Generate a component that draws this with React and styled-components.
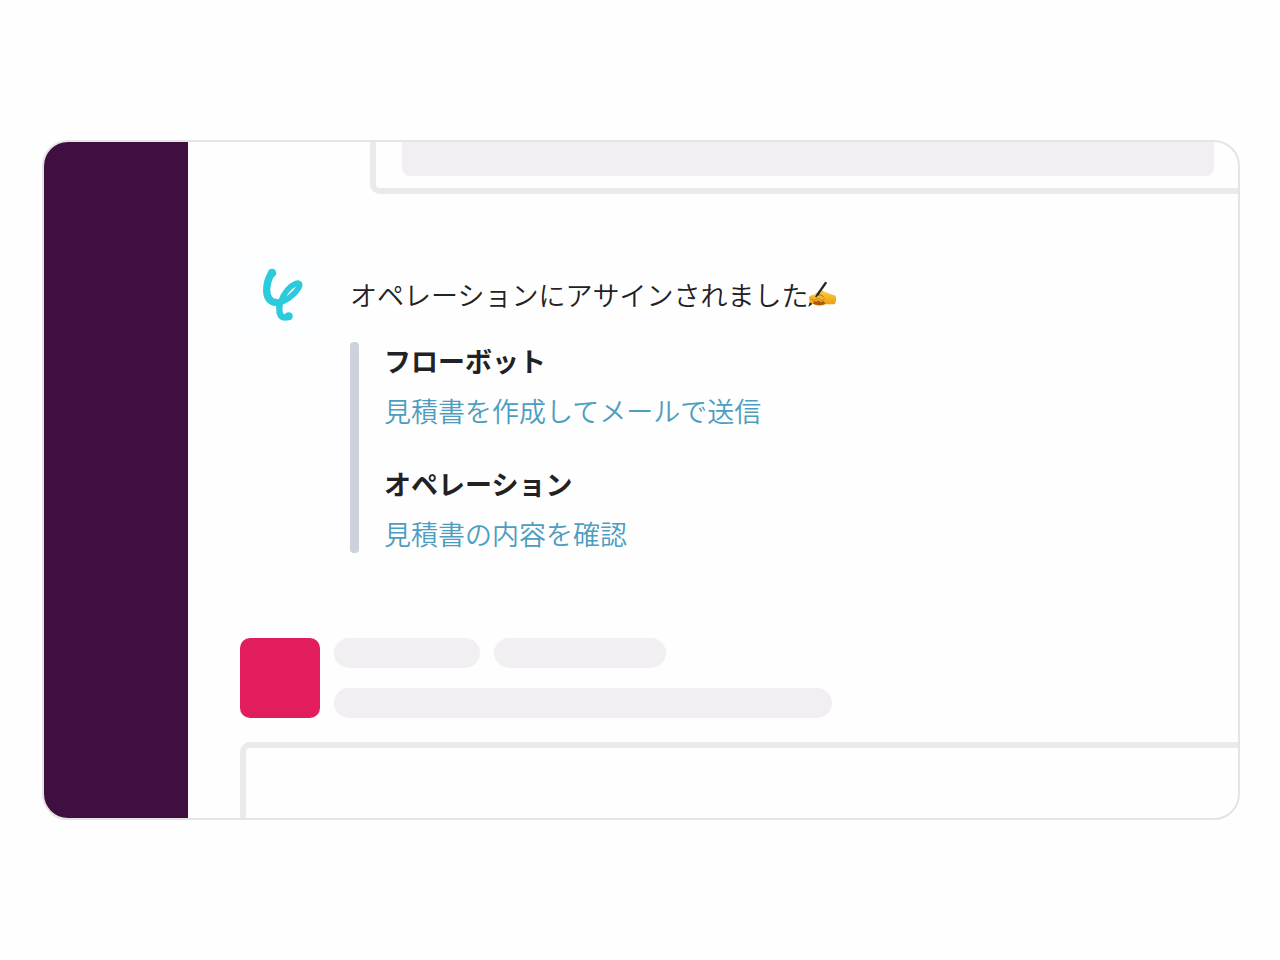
import React from "react";
import styled, { createGlobalStyle } from "styled-components";

const App = () => {
  return (
    <Page>
      <GlobalStyle />
      <Window>
        <Sidebar />
        <Feed>
          <PreviousCard>
            <PreviousFill />
          </PreviousCard>

          <Message>
            <Avatar>
              <BotLogo />
            </Avatar>
            <Body>
              <Text>
                オペレーションにアサインされました
                <WritingHand />
              </Text>
              <Quote>
                <Field>
                  <Label>フローボット</Label>
                  <FieldLink href="#flow">見積書を作成してメールで送信</FieldLink>
                </Field>
                <Field>
                  <Label>オペレーション</Label>
                  <FieldLink href="#operation">見積書の内容を確認</FieldLink>
                </Field>
              </Quote>
            </Body>
          </Message>

          <Skeleton>
            <SkeletonAvatar />
            <SkeletonLines>
              <SkeletonRow>
                <Bar $width={146} />
                <Bar $width={172} />
              </SkeletonRow>
              <SkeletonRow>
                <Bar $width={498} />
              </SkeletonRow>
            </SkeletonLines>
          </Skeleton>

          <NextCard />
        </Feed>
      </Window>
    </Page>
  );
};

const BotLogo = () => (
  <svg width="80" height="80" viewBox="0 18 240 240" fill="none" stroke="#2bcbdc" strokeLinecap="round" strokeLinejoin="round" aria-hidden="true">
    <path d="M95 70C84 86 80 104 80 121C80 146 93 158 112 158" strokeWidth="22" />
    <circle cx="96" cy="69" r="13" fill="#2bcbdc" stroke="none" />
    <path d="M110 159C136 156 164 134 176 114C183 101 177 97 167 101C148 109 131 132 122 155" strokeWidth="17" />
    <path d="M120 159C115 179 117 203 135 203C141 203 145 201 147 199" strokeWidth="19" />
    <circle cx="146" cy="199" r="12" fill="#2bcbdc" stroke="none" />
  </svg>
);

const WritingHand = () => (
  <Emoji viewBox="0 0 84 84" role="img" aria-label="書く手">
    <defs>
      <linearGradient id="skin" x1="0" y1="0" x2="0" y2="1">
        <stop offset="0" stopColor="#ffd044" />
        <stop offset="1" stopColor="#e99a0c" />
      </linearGradient>
    </defs>
    <path d="M1 78L5 64L14 68Z" fill="#252329" />
    <path d="M3 52C1 44 12 44 20 40L34 30C40 25 45 28 50 32L69 40L83 44C85 52 85 63 80 70H52C44 76 23 75 17 70C9 67 2 62 5 58Z" fill="url(#skin)" />
    <path d="M16 68C30 73 43 73 52 68L47 60L38 64L31 58L24 63L18 59Z" fill="#a85a12" />
    <path d="M7 54L21 57L31 52L42 59L51 52" fill="none" stroke="#d88710" strokeWidth="3" />
    <path d="M25 45L36 41L47 47" fill="none" stroke="#bd7310" strokeWidth="3" />
    <path d="M29 40L53 6" stroke="#29262c" strokeWidth="7" strokeLinecap="round" />
    <path d="M23 48L31 37" stroke="#29262c" strokeWidth="4" />
  </Emoji>
);

export default App;

const GlobalStyle = createGlobalStyle`
    * {
      box-sizing: border-box;
    }

    body {
      margin: 0;
      background: #fefefe;
      font-family: "Noto Sans CJK JP", sans-serif;
    }
`;

const Page = styled.main`
    min-height: 100vh;
    display: flex;
    align-items: center;
    padding: 0 40px 0 42px;
`;

const Window = styled.section`
    flex: 1;
    min-width: 0;
    display: flex;
    border: 2px solid #e4e3e6;
    border-radius: 26px;
    background: #fefefe;
    overflow: hidden;
`;

const Sidebar = styled.aside`
    flex: 0 0 144px;
    background: #3f0f3f;
`;

const Feed = styled.div`
    flex: 1;
    min-width: 0;
    padding-left: 52px;
`;

const PreviousCard = styled.div`
    margin-left: 130px;
    padding: 0 24px 12px 26px;
    border: solid #ebe9eb;
    border-width: 0 0 6px 6px;
    border-bottom-left-radius: 10px;
`;

const PreviousFill = styled.div`
    height: 34px;
    border-radius: 0 0 8px 8px;
    background: #f1eff2;
`;

const Message = styled.article`
    display: flex;
    gap: 30px;
    margin-top: 62px;
`;

const Avatar = styled.div`
    flex: 0 0 80px;
    height: 80px;
    background: #fcfeff;

    svg {
      display: block;
    }
`;

const Body = styled.div`
    flex: 1;
    padding-top: 20px;
    font-size: 27px;
    line-height: 38px;
    color: #222124;
`;

const Text = styled.p`
    margin: 0;
    display: flex;
    align-items: center;
    font-weight: 350;
`;

const Emoji = styled.svg`
    width: 28px;
    height: 28px;
`;

const Quote = styled.div`
    margin-top: 28px;
    padding-left: 26px;
    display: grid;
    gap: 35px;
    position: relative;

    &::before {
      content: "";
      position: absolute;
      left: 0;
      top: 0;
      bottom: 0;
      width: 9px;
      border-radius: 4px;
      background: #cdd1dc;
    }
`;

const Field = styled.div`
    display: grid;
    gap: 12px;
    justify-items: start;
    padding-left: 8px;
`;

const Label = styled.strong`
    font-weight: 700;
`;

const FieldLink = styled.a`
    font-weight: 350;
    color: #4d9dc0;
    text-decoration: none;
`;

const Skeleton = styled.div`
    display: flex;
    gap: 14px;
    margin-top: 85px;
`;

const SkeletonAvatar = styled.div`
    flex: 0 0 80px;
    height: 80px;
    border-radius: 10px;
    background: #e21d5b;
`;

const SkeletonLines = styled.div`
    flex: 1;
    display: grid;
    gap: 20px;
`;

const SkeletonRow = styled.div`
    display: flex;
    gap: 14px;
`;

const Bar = styled.div`
    width: ${(props) => props.$width}px;
    height: 30px;
    border-radius: 15px;
    background: #f1eff2;
`;

const NextCard = styled.div`
    height: 76px;
    margin-top: 24px;
    border: solid #ebe9eb;
    border-width: 6px 0 0 6px;
    border-top-left-radius: 10px;
`;
